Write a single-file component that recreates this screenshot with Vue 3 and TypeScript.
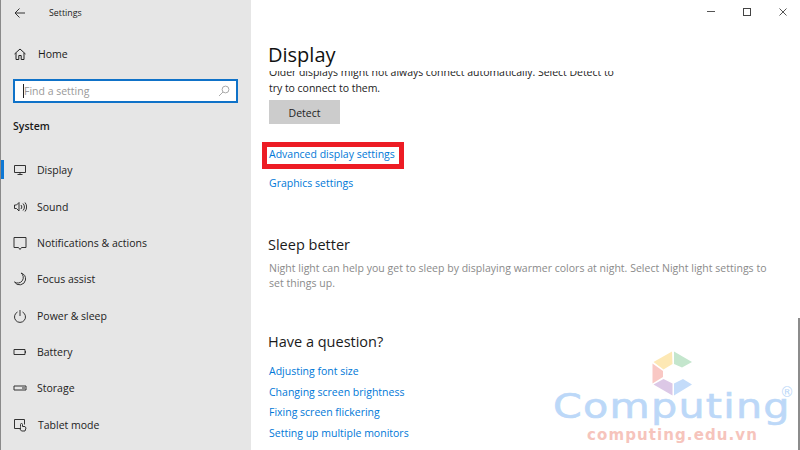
<template>
  <div class="window">
    <aside class="sidebar">
      <div class="titlebar">
        <svg class="back" width="10" height="10" viewBox="0 0 10 10"><path d="M4.500.500 0 5l4.500 4.500M0 5h10" fill="none" stroke="#333" stroke-width="1"/></svg>
        <span class="apptitle">Settings</span>
      </div>
      <div class="home">
        <svg width="12" height="12" viewBox="0 0 12 12"><path d="M.5 6 6 1l5.500 5M2 5v6.500h2.800V7.500h2.400v4H10V5" fill="none" stroke="#222" stroke-width="1"/></svg>
        <span>Home</span>
      </div>
      <div class="search">
        <span class="caret"></span>
        <span class="placeholder">Find a setting</span>
        <svg width="12" height="12" viewBox="0 0 12 12"><circle cx="7.500" cy="4.500" r="3.400" fill="none" stroke="#aaa"/><path d="M5 7 1 11" stroke="#aaa"/></svg>
      </div>
      <div class="section">System</div>
      <nav class="nav">
        <div v-for="item in nav" :key="item.label" class="nav-item" :class="{ active: item.active }">
          <svg width="14" height="14" viewBox="0 0 14 14" fill="none" stroke="#333" stroke-width="1">
            <path v-for="d in item.paths" :key="d" :d="d" />
          </svg>
          <span :class="{ shifted: item.label === 'Tablet mode' }">{{ item.label }}</span>
        </div>
      </nav>
    </aside>
    <main class="main">
      <div class="controls">
        <svg width="10" height="10" viewBox="0 0 10 10"><path d="M0 3.500h8" stroke="#555"/></svg>
        <svg width="10" height="10" viewBox="0 0 10 10"><rect x=".5" y=".5" width="7" height="7" fill="none" stroke="#444"/></svg>
        <svg width="10" height="10" viewBox="0 0 10 10"><path d="M.5.500l7 7M7.500.500l-7 7" stroke="#555"/></svg>
      </div>
      <h1 class="title">Display</h1>
      <div class="scrollarea">
        <p class="para clipped">Older displays might not always connect automatically. Select Detect to<br />try to connect to them.</p>
        <button class="detect">Detect</button>
        <a class="link advanced">Advanced display settings</a>
        <a class="link graphics">Graphics settings</a>
        <h2 class="heading sleep">Sleep better</h2>
        <p class="para muted">Night light can help you get to sleep by displaying warmer colors at night. Select Night light settings to<br />set things up.</p>
        <h2 class="heading question">Have a question?</h2>
        <div class="links">
          <a class="link">Adjusting font size</a>
          <a class="link">Changing screen brightness</a>
          <a class="link">Fixing screen flickering</a>
          <a class="link">Setting up multiple monitors</a>
        </div>
      </div>
      <div class="scrollbar"></div>
      <div class="watermark">
        <svg width="42" height="46" viewBox="0 0 42 46">
          <path d="M1.500 11 20 .5 20.500 13l-9 5.500z" fill="#fde8b4"/>
          <path d="M22 .5 40 11l-10 5.500-8-3.500z" fill="#c4e6cd"/>
          <path d="M.5 12.500 11 20v6L.5 32.500z" fill="#f9c8c4"/>
          <path d="M1.500 33.500 11.500 28l9 4.500v12z" fill="#dcc8e6"/>
          <path d="M22 32.500 31 28l9 5.500-18 11z" fill="#c4dcfa"/>
        </svg>
        <div class="wm-name">Computing</div>
        <div class="wm-reg">®</div>
        <div class="wm-url">computing.edu.vn</div>
      </div>
    </main>
  </div>
</template>

<script setup lang="ts">
interface NavItem {
  label: string
  paths: string[]
  active?: boolean
}

const nav: NavItem[] = [
  { label: 'Display', active: true, paths: ['M1.500 2.500h11v7h-11z', 'M7 9.500v2M4.500 11.500h5'] },
  { label: 'Sound', paths: ['M1.500 5v3.500h2L6 11V2.500L3.500 5z', 'M8 5a3 3 0 0 1 0 4M10 3.500a5 5 0 0 1 0 7M12 2.500a7 7 0 0 1 0 9'] },
  { label: 'Notifications & actions', paths: ['M1 1.500h12v10H8.500L7 13.500 5.500 11.500H1z'] },
  { label: 'Focus assist', paths: ['M8 1a5.500 5.500 0 0 1-6.500 9A6 6 0 0 0 12.500 8 6.500 6.500 0 0 0 8 1z'] },
  { label: 'Power & sleep', paths: ['M7 1v6', 'M4.500 3a5.500 5.500 0 1 0 5 0'] },
  { label: 'Battery', paths: ['M1 4.500h11v5H1z', 'M12.500 6v2'] },
  { label: 'Storage', paths: ['M1 5h12v4H1z', 'M9 7h3'] },
  { label: 'Tablet mode', paths: ['M8 10.500H1.500v-9h10v5', 'M7.500 8.500V6.500a1 1 0 0 1 2 0v2h2.500l1 1.500-1 3H8.500L6.500 10.500l1-1z'] },
]
</script>

<style scoped>
.window {
  width: 800px;
  height: 450px;
  display: flex;
  overflow: hidden;
  background: #fff;
  color: #1a1a1a;
  font-family: "Open Sans", "Noto Sans", sans-serif;
  font-size: 10.500px;
}
.sidebar {
  width: 251px;
  flex: none;
  background: #e6e6e6;
  border-left: 1px solid #8a8a8a;
  box-sizing: border-box;
}
.titlebar {
  height: 25px;
  display: flex;
  align-items: center;
  padding-left: 14px;
  font-size: 8.800px;
}
.apptitle { margin-left: 24px; }
.back { display: block; }
.home {
  margin-top: 19px;
  height: 20px;
  display: flex;
  align-items: center;
  gap: 12px;
  padding-left: 13px;
  font-size: 10.500px;
}
.search {
  margin: 15px 0 0 12px;
  width: 225px;
  height: 24px;
  box-sizing: border-box;
  border: 2px solid #0f72c8;
  background: #fff;
  display: flex;
  align-items: center;
  padding: 0 6px 0 8px;
  font-size: 10.500px;
}
.caret { width: 1px; height: 14px; background: #222; }
.placeholder { color: #999; flex: 1; }
.section {
  margin: 15px 0 0 12px;
  height: 16px;
  line-height: 16px;
  font-weight: 600;
  font-size: 10.500px;
}
.nav {
  margin-top: 26.300px;
  display: flex;
  flex-direction: column;
  gap: 16.350px;
}
.nav-item {
  height: 20px;
  display: flex;
  align-items: center;
  gap: 10px;
  padding-left: 12px;
  position: relative;
  font-size: 10.500px;
  color: #222;
}
.nav-item.active::before {
  content: "";
  position: absolute;
  left: 0;
  top: 0;
  width: 3px;
  height: 19px;
  background: #0f78d4;
}
.shifted { margin-left: 1px; }
.main {
  flex: 1;
  position: relative;
  min-width: 0;
}
.controls {
  position: absolute;
  right: 11px;
  top: 8px;
  display: flex;
  gap: 26px;
}
.controls svg { display: block; }
.title {
  margin: 0;
  padding: 41px 0 0 17px;
  height: 30px;
  line-height: 28px;
  font-size: 20px;
  font-weight: 400;
  color: #111;
}
.scrollarea {
  height: 379px;
  overflow: hidden;
  padding-left: 18px;
  box-sizing: border-box;
}
.para {
  margin: 0;
  line-height: 15.500px;
  font-size: 10.500px;
}
.clipped { margin-top: -6px; color: #222; letter-spacing: -0.030px; }
.muted { color: #8a8a8a; letter-spacing: 0.020px; }
.detect {
  display: block;
  margin-top: 4px;
  width: 71px;
  height: 24px;
  border: none;
  background: #cccccc;
  font: inherit;
  color: #222;
  padding: 1px 0 0;
}
.link {
  display: block;
  color: #0078d7;
  font-size: 10.500px;
  line-height: 20px;
}
.advanced {
  margin: 18px 0 0 -7px;
  padding-left: 2px;
  width: 130px;
  height: 17px;
  line-height: 15px;
  border: 5px solid #ed1c24;
}
.graphics { margin-top: 4px; }
.heading {
  margin: 0 0 0 -1px;
  font-weight: 400;
  font-size: 14.500px;
  line-height: 20px;
  color: #1a1a1a;
}
.sleep { margin-top: 42px; }
.sleep + .para { margin-top: 5.500px; }
.question { margin-top: 40px; }
.links {
  margin-top: 9.600px;
  display: flex;
  flex-direction: column;
  gap: 0.500px;
}
.scrollbar {
  position: absolute;
  right: 0;
  top: 318px;
  bottom: 0;
  width: 2px;
  background: #8c8c8c;
}
.watermark {
  position: absolute;
  left: 300px;
  top: 349px;
  width: 249px;
  height: 101px;
  pointer-events: none;
}
.watermark svg {
  position: absolute;
  left: 101px;
  top: 2px;
}
.wm-name {
  position: absolute;
  left: 2px;
  top: 33px;
  font-family: "DejaVu Sans", sans-serif;
  font-size: 33px;
  line-height: 50px;
  letter-spacing: 1px;
  color: #bcd8f8;
  -webkit-text-stroke: 0.6px #bcd8f8;
  white-space: nowrap;
  transform: scaleX(1.25);
  transform-origin: left center;
}
.wm-reg {
  position: absolute;
  left: 229px;
  top: 35px;
  font-family: "DejaVu Sans", sans-serif;
  font-size: 14px;
  line-height: 16px;
  color: #bcd8f8;
}
.wm-url {
  position: absolute;
  left: 36px;
  top: 78px;
  font-family: "DejaVu Sans", sans-serif;
  font-weight: 700;
  font-size: 15px;
  line-height: 16px;
  letter-spacing: 1.100px;
  color: #f6c4bc;
  white-space: nowrap;
}
</style>
